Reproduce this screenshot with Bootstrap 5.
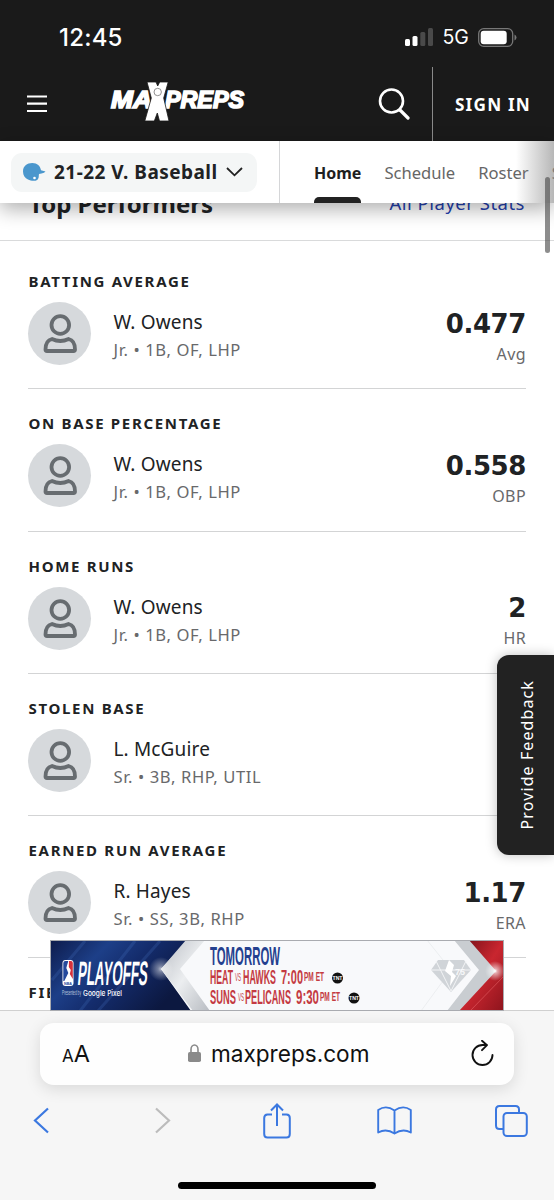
<!DOCTYPE html>
<html lang="en">
<head>
<meta charset="utf-8">
<meta name="viewport" content="width=device-width, initial-scale=1">
<title>MaxPreps – V. Baseball</title>
<link href="https://cdn.jsdelivr.net/npm/bootstrap@5.3.0/dist/css/bootstrap.min.css" rel="stylesheet">
<style>
body{font-family:"Noto Sans",sans-serif;color:#202224;height:1200px;overflow:hidden;background:#fff}
svg{display:block;flex:none}
.ios{font-family:Inter,"Liberation Sans",sans-serif}
.top-dark{background:#1a1a1a;height:141px;flex:none}
.status-row{height:67px;padding:8px 37px 0 59px}
.clock{font-size:24px;font-weight:500;letter-spacing:.2px;line-height:1}
.net{font-size:19.5px;line-height:1;letter-spacing:-.2px;margin:0 9.500px}
.bars{margin-bottom:2px}
.brand-row{height:74px;padding-left:26px}
.logo{margin:-4px 0 0 61px}
.find{margin-right:22px}
.signin{border-left:1px solid #8a8a8a;width:122px;font-weight:700;font-size:17.2px;letter-spacing:1.2px;padding:2px 1px 0 0;white-space:nowrap}
.team-nav{height:62px;flex:none;background:#fff;box-shadow:0 6px 20px rgba(0,0,0,.32);z-index:3}
.team-pick{margin-left:11px;width:246px;flex:none;height:39px;border-radius:11px;background:#f4f6f6;padding-left:11px;font-weight:700;font-size:19px;letter-spacing:.46px}
.tabs{border-left:1px solid #d5d6d8;margin-left:22px;font-size:16.6px;color:#666;white-space:nowrap;overflow:hidden;padding-top:2px}
.tabs>span{margin-left:23px}
.tabs>.tab-on{color:#1e1e1e;font-weight:700;font-size:16px;margin-left:34px}
.tab-on::after{content:"";position:absolute;left:0;right:0;bottom:0;height:6px;background:#222;border-radius:5px 5px 0 0}
.fade-edge{right:0;top:0;bottom:0;width:38px;background:linear-gradient(90deg,rgba(255,255,255,0),rgba(135,135,135,.6))}
.feed{min-height:0}
.feed-head{height:38px;border-bottom:1px solid #d9dadb;padding:0 29px;margin-bottom:6px}
.feed-title{font-size:24px;font-weight:700;line-height:24px;margin-top:-11px}
.feed-link{font-size:18.5px;letter-spacing:.5px;line-height:24px;margin-top:-12px;color:#2440ad;text-decoration:none}
.stat{height:142.3px;border-bottom:1px solid #d3d4d5;margin:0 28px;padding-top:24px}
.stat-name{font-size:15px;font-weight:700;letter-spacing:1.68px;line-height:20px;margin-left:.5px}
.face{width:63px;height:63px;background:#d6d9dc;margin-top:11px}
.player{font-size:19px;letter-spacing:.15px;line-height:26px;margin:18px 0 0 22.5px}
.pos{font-size:16.6px;letter-spacing:.6px;line-height:22px;color:#68696b;margin:4px 0 0 22.5px}
.num{font-family:"DejaVu Sans",sans-serif;font-size:26px;font-weight:700;line-height:30px;margin-top:17.5px;letter-spacing:-.4px}
.unit{font-size:16px;letter-spacing:.4px;line-height:20px;color:#68696b;margin-top:5px}
.feedback{right:0;top:655px;width:57px;height:200px;background:#222;color:#fff;border-radius:12px 0 0 12px;box-shadow:0 0 12px rgba(0,0,0,.25);z-index:4}
.feedback span{writing-mode:vertical-rl;transform:rotate(180deg);font-size:16px;letter-spacing:1.1px;padding-right:3px}
.scroller{right:4px;top:177px;width:5px;height:76px;border-radius:3px;background:rgba(80,80,80,.65);z-index:5}
.promo{left:50px;top:940px;z-index:4}
.safari{height:190px;flex:none;background:#f6f6f6;border-top:1px solid #d0d0d0;z-index:3}
.urlbar{margin:12px 40px 0;height:62px;border-radius:14px;background:#fefefe;box-shadow:0 4px 16px rgba(0,0,0,.12);color:#111;padding:0 20px 0 22px}
.aa-small{font-size:17px}.aa-big{font-size:23.5px}
.lock{margin:-2px 0 0 98px}
.url-text{font-size:22.6px;margin-left:10px}
.tools{height:71px;padding-left:33px}
.t-fwd{margin-left:103.5px}.t-share{margin-left:92.500px}.t-book{margin-left:85.5px}.t-tabs{margin-left:83px}
.home-bar{width:198px;height:7px;border-radius:4px;background:#000;margin-top:26px}
</style>
</head>
<body class="d-flex flex-column position-relative">
<svg width="0" height="0" class="position-absolute"><defs>
<symbol id="person" viewBox="0 0 63 63"><g fill="none" stroke="#676c70" stroke-width="3.8"><circle cx="32.300" cy="23" r="8.800"/><path d="M24 37q8.300 4 16.600 0q6.400 1.500 6.400 10.500q0 1.500-1.500 1.500H19q-1.500 0-1.500-1.500Q17.500 38.500 24 37z" stroke-linejoin="round"/></g></symbol>
</defs></svg>

<header class="top-dark text-white">
  <div class="status-row d-flex align-items-center justify-content-between ios">
    <span class="clock">12:45</span>
    <div class="d-flex align-items-center">
      <svg class="bars" width="28" height="18" viewBox="0 0 28 18"><rect y="11" width="5" height="7" rx="1.500" fill="#fff"/><rect x="7.500" y="8" width="5" height="10" rx="1.500" fill="#fff"/><rect x="15.300" y="4" width="5" height="14" rx="1.500" fill="#4a4a4a"/><rect x="23" width="5" height="18" rx="1.500" fill="#4a4a4a"/></svg>
      <span class="net">5G</span>
      <svg width="39" height="19" viewBox="0 0 39 19"><rect x=".7" y=".7" width="34" height="17.600" rx="5" fill="none" stroke="#777" stroke-width="1.300"/><rect x="2.700" y="2.700" width="26" height="13.600" rx="3" fill="#fff"/><path d="M36.500 6.500q2 .8 2 3t-2 3z" fill="#777"/></svg>
    </div>
  </div>
  <div class="brand-row d-flex align-items-center">
    <svg width="22" height="18" viewBox="0 0 22 18"><path d="M1 1.500h20M1 8.700h20M1 16h20" stroke="#fff" stroke-width="2.200"/></svg>
    <svg class="logo" width="142" height="42" viewBox="0 0 142 42"><g fill="#fff" stroke="#fff" stroke-width="1.700" font-family="Liberation Sans" font-weight="700" font-style="italic" font-size="24.500"><text x="2" y="27" textLength="41" lengthAdjust="spacingAndGlyphs">MA</text><text x="56" y="27" textLength="79" lengthAdjust="spacingAndGlyphs">PREPS</text></g><path d="M38 1h9l1.700 4 2-4h8.500l-4.500 16 5.300 23h-9.500l-2.200-8-3 8h-9.500l6.500-23z" fill="#fff" stroke="#1a1a1a" stroke-width=".8"/><circle cx="48.700" cy="11" r="3.700" fill="#fff" stroke="#777" stroke-width=".8"/></svg>
    <svg class="find ms-auto" width="32" height="33" viewBox="0 0 32 33"><circle cx="13.500" cy="13" r="11.500" fill="none" stroke="#fff" stroke-width="2.600"/><path d="M22 22l8 8" stroke="#fff" stroke-width="3.200" stroke-linecap="round"/></svg>
    <div class="signin h-100 d-flex align-items-center justify-content-center">SIGN IN</div>
  </div>
</header>

<nav class="team-nav d-flex align-items-center position-relative">
  <div class="team-pick d-flex align-items-center">
    <svg width="24" height="20" viewBox="0 0 24 20"><path d="M1 9.500C1 4 5 1 10.300 1c5 0 8 3 8.700 7.300l4.500 1.200q-1 1.600-4 2l-2.500.5c-.5 2 .3 4-1.500 5.700-2.500 1.800-6.500 1.300-9.500-.2C3 16 1 13.500 1 9.500z" fill="#4a97cd"/><circle cx="12.500" cy="16" r="1.300" fill="#fff"/></svg>
    <span class="ms-2 text-nowrap">21-22 V. Baseball</span>
    <svg class="ms-2" width="17" height="10" viewBox="0 0 17 10"><path d="M1 1l7.500 7.300L16 1" fill="none" stroke="#222" stroke-width="1.800"/></svg>
  </div>
  <div class="tabs h-100 flex-grow-1 d-flex align-items-stretch position-relative">
    <span class="tab-on position-relative d-flex align-items-center">Home</span>
    <span class="d-flex align-items-center">Schedule</span>
    <span class="d-flex align-items-center">Roster</span>
    <span class="d-flex align-items-center">Stats</span>
    <div class="fade-edge position-absolute"></div>
  </div>
</nav>

<main class="feed flex-grow-1 overflow-hidden">
  <div class="feed-head d-flex justify-content-between"><h2 class="feed-title">Top Performers</h2><a class="feed-link" href="#">All Player Stats</a></div>
  <section class="stat"><div class="stat-name">BATTING AVERAGE</div><div class="d-flex align-items-start"><div class="face rounded-circle"><svg width="63" height="63"><use href="#person"/></svg></div><div><div class="player">W. Owens</div><div class="pos">Jr. • 1B, OF, LHP</div></div><div class="ms-auto text-end"><div class="num">0.477</div><div class="unit">Avg</div></div></div></section>
  <section class="stat"><div class="stat-name">ON BASE PERCENTAGE</div><div class="d-flex align-items-start"><div class="face rounded-circle"><svg width="63" height="63"><use href="#person"/></svg></div><div><div class="player">W. Owens</div><div class="pos">Jr. • 1B, OF, LHP</div></div><div class="ms-auto text-end"><div class="num">0.558</div><div class="unit">OBP</div></div></div></section>
  <section class="stat"><div class="stat-name">HOME RUNS</div><div class="d-flex align-items-start"><div class="face rounded-circle"><svg width="63" height="63"><use href="#person"/></svg></div><div><div class="player">W. Owens</div><div class="pos">Jr. • 1B, OF, LHP</div></div><div class="ms-auto text-end"><div class="num">2</div><div class="unit">HR</div></div></div></section>
  <section class="stat"><div class="stat-name">STOLEN BASE</div><div class="d-flex align-items-start"><div class="face rounded-circle"><svg width="63" height="63"><use href="#person"/></svg></div><div><div class="player">L. McGuire</div><div class="pos">Sr. • 3B, RHP, UTIL</div></div></div></section>
  <section class="stat"><div class="stat-name">EARNED RUN AVERAGE</div><div class="d-flex align-items-start"><div class="face rounded-circle"><svg width="63" height="63"><use href="#person"/></svg></div><div><div class="player">R. Hayes</div><div class="pos">Sr. • SS, 3B, RHP</div></div><div class="ms-auto text-end"><div class="num">1.17</div><div class="unit">ERA</div></div></div></section>
  <section class="stat"><div class="stat-name">FIE</div></section>
</main>

<div class="scroller position-absolute"></div>
<div class="feedback position-absolute d-flex align-items-center justify-content-center"><span>Provide Feedback</span></div>

<svg class="promo position-absolute" width="454" height="71" viewBox="0 0 454 71" font-family="Liberation Sans Narrow, Liberation Sans, sans-serif">
  <defs>
    <linearGradient id="blue" x2="1" y2=".5"><stop offset="0" stop-color="#0d1b4b"/><stop offset=".35" stop-color="#1d3f88"/><stop offset=".6" stop-color="#142c6c"/><stop offset="1" stop-color="#0c1840"/></linearGradient>
    <linearGradient id="silver" x2="1" y2="1"><stop offset="0" stop-color="#b9bdc4"/><stop offset=".5" stop-color="#eceef0"/><stop offset="1" stop-color="#b8bcc2"/></linearGradient>
    <linearGradient id="red" x2="1" y2="1"><stop offset="0" stop-color="#6d0f16"/><stop offset=".5" stop-color="#c9262f"/><stop offset="1" stop-color="#8d141d"/></linearGradient>
    <radialGradient id="flare"><stop offset="0" stop-color="#fff"/><stop offset=".25" stop-color="#fff" stop-opacity=".6"/><stop offset="1" stop-color="#fff" stop-opacity="0"/></radialGradient>
  </defs>
  <rect width="454" height="71" fill="#f8f9fb"/>
  <path d="M0 0h138l-27 29 30 42H0z" fill="url(#blue)"/>
  <path d="M30 71L85 1M48 71L110 1M2 40L35 1" stroke="#4a78c8" stroke-width="3" opacity=".22"/>
  <path d="M136 0h19l-25 29 30 42h-17l-32-42z" fill="url(#silver)"/>
  <circle cx="111" cy="29" r="12" fill="url(#flare)" opacity=".7"/>
  <path d="M404 0h16l26 31-27 40h-22l32-41z" fill="#c9cdd1"/><path d="M377 0l24 30-30 41" fill="none" stroke="#eceef0"/>
  <path d="M419 0h35v71h-45l37-40z" fill="url(#red)"/><path d="M420 71l34-35" stroke="#ef6b70" opacity=".5"/>
  <circle cx="445" cy="31" r="10" fill="url(#flare)"/>
  <g fill="#d0d4d8"><path d="M388 20h26l7 10-20 22-20-22z"/><path d="M386 21l15 30 15-30M381 30h40" stroke="#f3f4f6" fill="none"/><path d="M399 20l5 5-2 7 4 4-6 10 1-10-6-5z" fill="#fff"/><text x="405" y="35" font-size="9" font-weight="700" fill="#f7f8fa">75</text></g>
  <rect x="12.500" y="20" width="11" height="26" rx="3" fill="#fff"/><path d="M13.300 23q0-2 2-2h3l-2 7 2 5-4 8h-1z" fill="#24499c"/><path d="M19 21h2q1.800 0 1.800 2v16l-3-5 1-4-2-3z" fill="#d4313b"/><text x="14" y="45" font-size="4" font-weight="700" fill="#24499c" textLength="8" lengthAdjust="spacingAndGlyphs">NBA</text>
  <g transform="translate(27 45) skewX(-5)" fill="#fff"><text font-size="34" font-weight="700" textLength="70" lengthAdjust="spacingAndGlyphs">PLAYOFFS</text></g>
  <text x="12" y="55" font-size="6.500" fill="#bfc8de" textLength="19" lengthAdjust="spacingAndGlyphs">Presented by</text>
  <text x="33" y="55.500" font-size="7.500" font-family="Inter" font-weight="500" fill="#fff" textLength="39" lengthAdjust="spacingAndGlyphs">Google Pixel</text>
  <g font-weight="700">
  <text x="160" y="25" font-size="26" fill="#24408f" textLength="70" lengthAdjust="spacingAndGlyphs">TOMORROW</text>
  <g fill="#c43a42"><text x="160" y="44" font-size="20.500" textLength="23" lengthAdjust="spacingAndGlyphs">HEAT</text><text x="193" y="44" font-size="20.500" textLength="33" lengthAdjust="spacingAndGlyphs">HAWKS</text><text x="231" y="44" font-size="20.500" textLength="22" lengthAdjust="spacingAndGlyphs">7:00</text><text x="254" y="41" font-size="12" textLength="20" lengthAdjust="spacingAndGlyphs">PM ET</text>
  <text x="160" y="64" font-size="20.500" textLength="26" lengthAdjust="spacingAndGlyphs">SUNS</text><text x="195" y="64" font-size="20.500" textLength="46" lengthAdjust="spacingAndGlyphs">PELICANS</text><text x="246" y="64" font-size="20.500" textLength="23" lengthAdjust="spacingAndGlyphs">9:30</text><text x="270" y="61" font-size="12" textLength="20" lengthAdjust="spacingAndGlyphs">PM ET</text>
  <g font-weight="400"><text x="185" y="41" font-size="11" textLength="6" lengthAdjust="spacingAndGlyphs">VS</text><text x="188" y="61" font-size="11" textLength="6" lengthAdjust="spacingAndGlyphs">VS</text></g></g>
  <circle cx="287.500" cy="38" r="5.500" fill="#111"/><circle cx="304" cy="58" r="5.500" fill="#111"/><g font-size="4.500" fill="#fff"><text x="282.500" y="39.700" textLength="10" lengthAdjust="spacingAndGlyphs">TNT</text><text x="299" y="59.700" textLength="10" lengthAdjust="spacingAndGlyphs">TNT</text></g></g>
  <rect x=".5" y=".5" width="453" height="70" fill="none" stroke="#a9abb0"/>
</svg>

<footer class="safari ios d-flex flex-column">
  <div class="urlbar d-flex align-items-center">
    <span class="lh-1"><span class="aa-small">A</span><span class="aa-big">A</span></span>
    <svg class="lock" width="13" height="18" viewBox="0 0 13 18"><path d="M3 9V5.500a3.500 4.500 0 0 1 7 0V9" fill="none" stroke="#8a8a8a" stroke-width="1.600"/><rect y="8" width="13" height="10" rx="1.800" fill="#8a8a8a"/></svg>
    <span class="url-text">maxpreps.com</span>
    <svg class="ms-auto" width="24" height="28" viewBox="0 0 24 28"><g transform="translate(1 -1)" fill="none" stroke="#111" stroke-width="1.900" stroke-linecap="round" stroke-linejoin="round"><path d="M21.500 16A10 10 0 1 1 11.500 6H16M11 1.800L16 6.200l-5 5"/></g></svg>
  </div>
  <div class="tools d-flex align-items-center">
    <svg width="17" height="27" viewBox="0 0 17 27"><path d="M15 1.500L2 13.500 15 25.500" fill="none" stroke="#3b78e0" stroke-width="2.200"/></svg>
    <svg class="t-fwd" width="17" height="27" viewBox="0 0 17 27"><path d="M2 1.500l13 12-13 12" fill="none" stroke="#bcbcbc" stroke-width="2.200"/></svg>
    <svg class="t-share" width="28" height="36" viewBox="0 0 28 36"><path d="M9 11.500H4.500Q1.200 11.500 1.200 15v16q0 3.500 3.300 3.500h19q3.300 0 3.300-3.500V15q0-3.500-3.300-3.500H19M14 23V2M8 7.500L14 1.500l6 6" fill="none" stroke="#3b78e0" stroke-width="2"/></svg>
    <svg class="t-book" width="35" height="29" viewBox="0 0 35 29"><path d="M17.500 4.500Q9-1.500 1.200 4v22.500q8-4.500 16.300 1 8.300-5.500 16.300-1V4Q26-1.500 17.500 4.500v23" fill="none" stroke="#3b78e0" stroke-width="1.900" stroke-linejoin="round"/></svg>
    <svg class="t-tabs" width="33" height="32" viewBox="0 0 33 32"><g fill="none" stroke="#3b78e0" stroke-width="2"><path d="M8 24H4.500Q1 24 1 20.500v-16Q1 1 4.500 1h16Q24 1 24 4.500V8"/><rect x="8.500" y="8" width="23.300" height="23" rx="3.500"/></g></svg>
  </div>
  <div class="home-bar align-self-center"></div>
</footer>
<script src="https://cdn.jsdelivr.net/npm/bootstrap@5.3.0/dist/js/bootstrap.bundle.min.js"></script>
</body>
</html>
